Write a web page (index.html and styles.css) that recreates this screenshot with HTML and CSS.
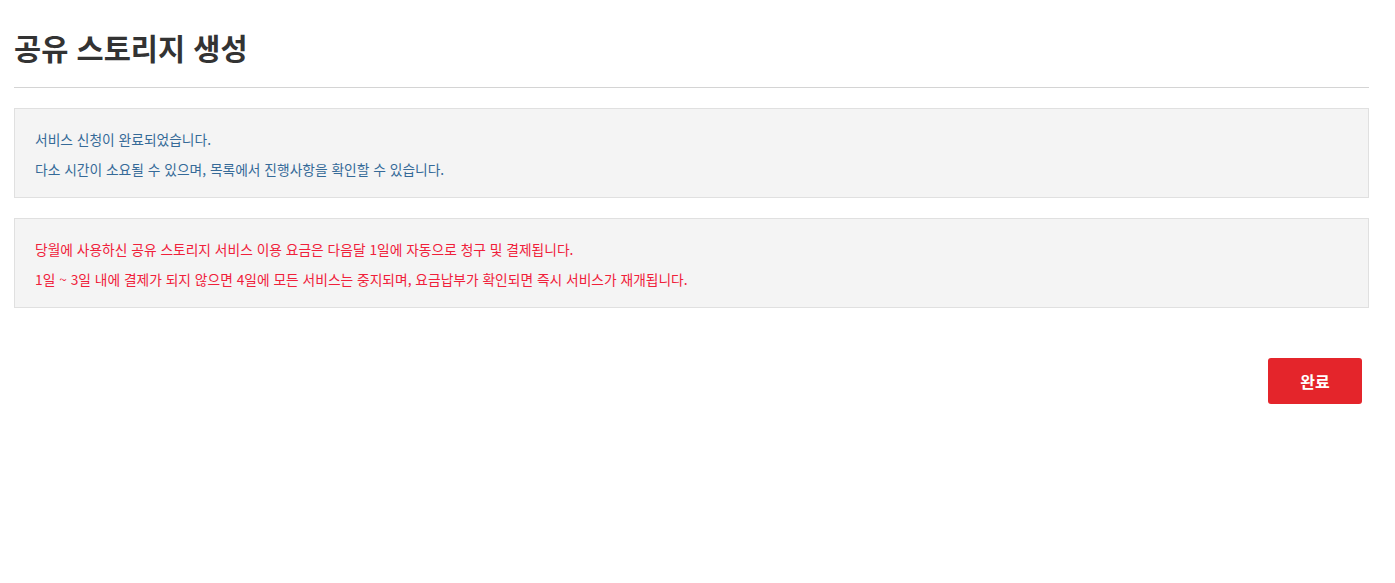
FILE: index.html
```html
<!DOCTYPE html>
<html lang="ko">
<head>
<meta charset="utf-8">
<title>공유 스토리지 생성</title>
<link rel="stylesheet" href="styles.css">
</head>
<body>
<div class="page">
  <h1 class="title">공유 스토리지 생성</h1>
  <div class="notice notice-info">
    <p>서비스 신청이 완료되었습니다.</p>
    <p>다소 시간이 소요될 수 있으며, 목록에서 진행사항을 확인할 수 있습니다.</p>
  </div>
  <div class="notice notice-warn">
    <p>당월에 사용하신 공유 스토리지 서비스 이용 요금은 다음달 1일에 자동으로 청구 및 결제됩니다.</p>
    <p>1일 ~ 3일 내에 결제가 되지 않으면 4일에 모든 서비스는 중지되며, 요금납부가 확인되면 즉시 서비스가 재개됩니다.</p>
  </div>
  <div class="actions">
    <button class="btn-primary" type="button">완료</button>
  </div>
</div>
</body>
</html>
```

FILE: styles.css
```css
html, body {
  margin: 0;
  padding: 0;
  background: #ffffff;
}
body {
  font-family: "Noto Sans CJK KR", "Noto Sans", sans-serif;
}
.page {
  padding: 0 26px 0 14px;
}
.title {
  margin: 0;
  padding-top: 25px;
  box-sizing: border-box;
  height: 88px;
  font-size: 29.5px;
  line-height: 44px;
  font-weight: 700;
  color: #333333;
  border-bottom: 1px solid #d4d4d4;
}
.notice {
  margin-top: 20px;
  background: #f4f4f4;
  border: 1px solid #e0e0e0;
  padding: 15px 20px 13px;
}
.notice p {
  margin: 0;
  font-size: 13.75px;
  line-height: 30px;
}
.notice-info p {
  color: #356a98;
}
.notice-warn p {
  color: #f0203a;
}
.actions {
  display: flex;
  justify-content: flex-end;
  padding: 50px 7px 0 0;
}
.btn-primary {
  width: 94px;
  height: 46px;
  border: 0;
  border-radius: 3px;
  background: #e4252b;
  color: #ffffff;
  font-family: "Noto Sans CJK KR", "Noto Sans", sans-serif;
  font-size: 16px;
  font-weight: 700;
  cursor: pointer;
}
```
